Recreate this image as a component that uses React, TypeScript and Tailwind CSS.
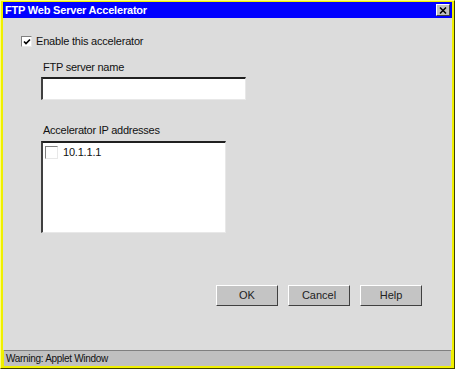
import React from "react"

const font = { fontFamily: '"Liberation Sans", Arial, sans-serif' }

function CheckBox({ checked, size = "w-[11px] h-[11px]" }: { checked?: boolean; size?: string }) {
  return (
    <div className={`${size} shrink-0 bg-white border-t border-l border-[#808080] border-r border-b border-r-[#e8e8e8] border-b-[#e8e8e8] flex items-center justify-center`}>
      {checked && (
        <svg width="8" height="8" viewBox="0 0 8 8">
          <path d="M1 3.5 L3 5.5 L7 1.5" stroke="#000" strokeWidth="1.7" fill="none" />
        </svg>
      )}
    </div>
  )
}

function Button({ label }: { label: string }) {
  return (
    <button className="w-[62px] h-[21px] bg-[#c4c4c4] border border-t-white border-l-white border-r-[#404040] border-b-[#404040] text-[11px] text-[#222] flex items-center justify-center">
      {label}
    </button>
  )
}

export default function App() {
  return (
    <div className="w-[455px] h-[369px] bg-[#f0f000] border-t border-l border-[#ffff80] border-r border-b border-r-[#404000] border-b-[#404000] pt-[1px] px-[2px] pb-[2px] flex flex-col" style={font}>
      {/* title bar */}
      <div className="h-[16px] shrink-0 bg-[#0000ff] flex items-center justify-between pl-[2px] pr-[2px]">
        <span className="text-white font-bold text-[11px] leading-none tracking-[-0.2px]">FTP Web Server Accelerator</span>
        <div className="w-[14px] h-[12px] bg-[#c0c0c0] border border-t-white border-l-white border-r-[#404040] border-b-[#404040] flex items-center justify-center">
          <svg width="8" height="7" viewBox="0 0 8 7">
            <path d="M1 0.5 L7 6.5 M7 0.5 L1 6.5" stroke="#000" strokeWidth="1.5" />
          </svg>
        </div>
      </div>

      {/* body */}
      <div className="h-[332px] shrink-0 bg-[#dcdcdc] flex flex-col pl-[18px] pt-[18px] text-[11px] text-[#111]">
        <div className="flex items-center gap-[4px] h-[11px]">
          <CheckBox checked />
          <span className="leading-none tracking-[-0.2px]">Enable this accelerator</span>
        </div>

        <div className="pl-[20px] mt-[15px] flex flex-col">
          <span className="pl-[2px] leading-none tracking-[-0.25px] h-[11px]">FTP server name</span>
          <div className="mt-[4px] w-[205px] h-[23px] bg-white border-t-2 border-l-2 border-t-[#202020] border-l-[#404040] border-r border-b border-r-[#e8e8e8] border-b-[#e8e8e8]" />

          <span className="pl-[2px] mt-[25px] leading-none tracking-[-0.25px] h-[11px]">Accelerator IP addresses</span>
          <div className="mt-[5px] w-[185px] h-[92px] bg-white border-t-2 border-l-2 border-t-[#202020] border-l-[#404040] border-r border-b border-r-[#e8e8e8] border-b-[#e8e8e8] pl-[2px] pt-[3px]">
            <div className="flex items-center gap-[5px]">
              <CheckBox size="w-[13px] h-[13px]" />
              <span className="leading-none tracking-[-0.2px]">10.1.1.1</span>
            </div>
          </div>
        </div>

        <div className="mt-[52px] ml-[195px] flex gap-[10px]">
          <Button label="OK" />
          <Button label="Cancel" />
          <Button label="Help" />
        </div>
      </div>

      {/* status bar */}
      <div className="h-[16px] shrink-0 bg-[#c0c0c0] border-t border-[#808080] flex items-center pl-[2px] mx-[1px]">
        <span className="text-[10px] leading-none text-[#111] tracking-[-0.3px]">Warning: Applet Window</span>
      </div>
    </div>
  )
}
